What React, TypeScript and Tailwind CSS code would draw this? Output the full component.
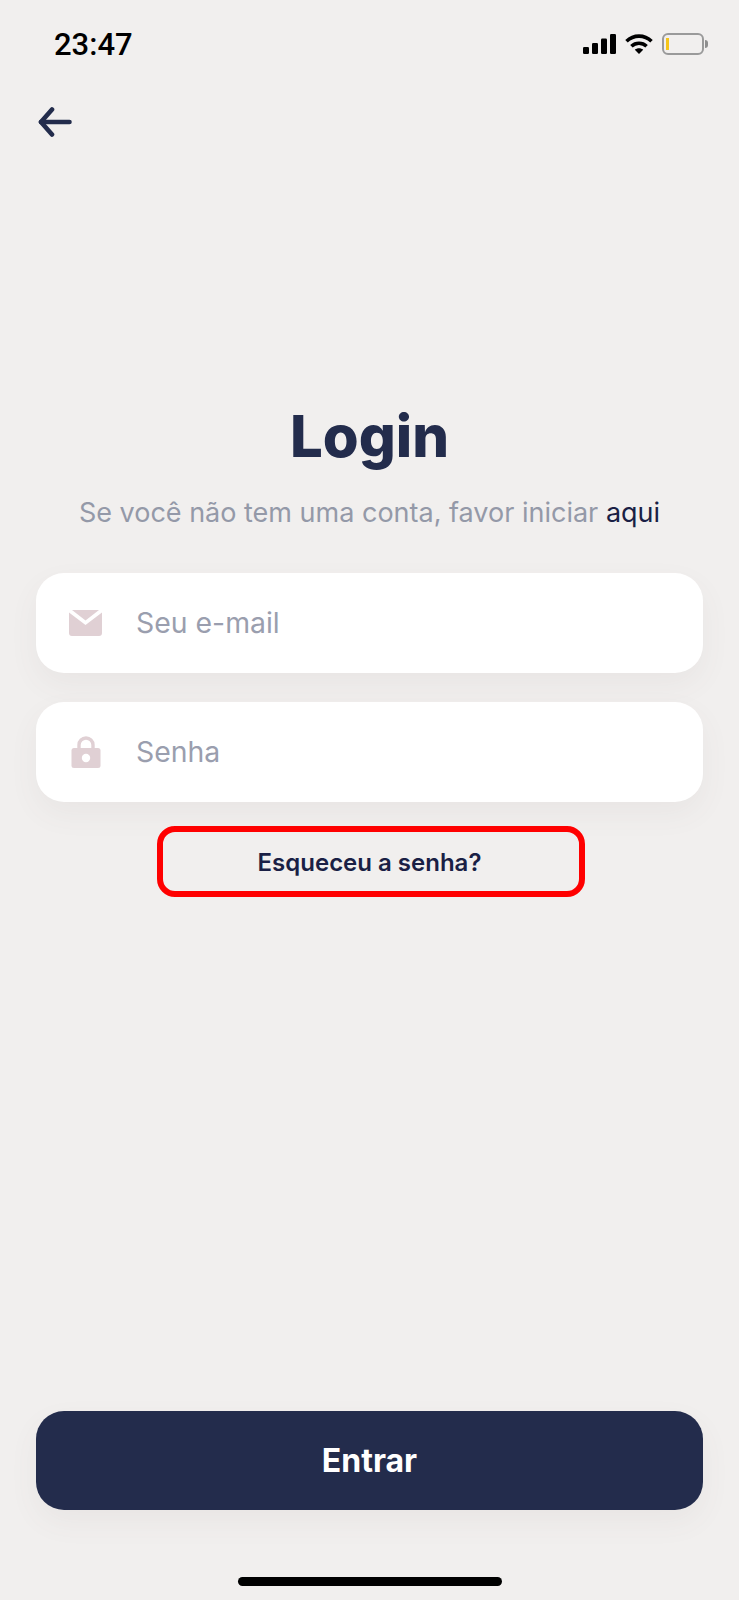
const FONT = "font-['Inter','Liberation_Sans',sans-serif]";

function SignalIcon() {
  return (
    <svg width="33" height="20" viewBox="0 0 33 20" fill="#000">
      <rect x="0" y="13" width="6" height="7" rx="1.2" />
      <rect x="9" y="9" width="6" height="11" rx="1.2" />
      <rect x="18" y="4.5" width="6" height="15.5" rx="1.2" />
      <rect x="27" y="0" width="6" height="20" rx="1.2" />
    </svg>
  );
}

function WifiIcon() {
  return (
    <svg width="28" height="20" viewBox="0 0 28 20" fill="none" stroke="#000" strokeWidth="3.6">
      <path d="M1.5 7.2C8.6 0.4 19.4 0.4 26.5 7.2" />
      <path d="M6.4 12.2C10.7 8.2 17.3 8.2 21.6 12.2" />
      <path d="M14 20L9.8 15.8C12.2 13.8 15.8 13.8 18.2 15.8Z" fill="#000" stroke="none" />
    </svg>
  );
}

function BatteryIcon() {
  return (
    <div className="flex items-center">
      <div className="flex h-[22px] w-[42px] items-center rounded-[6px] border-2 border-[#9a9a9a] pl-[2px]">
        <div className="h-[12px] w-[2.5px] bg-[#f5c518]" />
      </div>
      <div className="ml-[1px] h-[8px] w-[3px] rounded-r-full bg-[#8e8e8e]" />
    </div>
  );
}

function BackArrow() {
  return (
    <svg width="34" height="30" viewBox="0 0 34 30" fill="none" stroke="#232c4c" strokeWidth="4.6" strokeLinecap="round" strokeLinejoin="round">
      <path d="M31.5 15H3" />
      <path d="M14 2.5L3 15L14 27.5" />
    </svg>
  );
}

function MailIcon() {
  return (
    <svg width="33" height="26" viewBox="0 0 33 26" className="shrink-0">
      <path d="M0 2.5L0 23a3 3 0 0 0 3 3H30a3 3 0 0 0 3-3V2.5L16.5 15Z" fill="#e0d0d4" />
      <path d="M3 0H30L16.5 10.5Z" fill="#e0d0d4" />
    </svg>
  );
}

function LockIcon() {
  return (
    <svg width="30" height="32" viewBox="0 0 30 32" className="ml-[2px] shrink-0">
      <path d="M8 13V9a7 7 0 0 1 14 0v4" fill="none" stroke="#e0d0d4" strokeWidth="3.4" />
      <rect x="0.5" y="12" width="29" height="20" rx="2.5" fill="#e0d0d4" />
      <circle cx="15" cy="22" r="4.2" fill="#fff" />
    </svg>
  );
}

function Field({ icon, label }: { icon: React.ReactNode; label: string }) {
  return (
    <div className="flex h-[100px] items-center rounded-[28px] bg-white shadow-[0_12px_30px_rgba(110,80,80,0.06)]">
      <div className="flex w-[100px] justify-start pl-[33px]">{icon}</div>
      <span className="text-[28.4px] leading-none text-[#9a9eae]">{label}</span>
    </div>
  );
}

export default function App() {
  return (
    <div className={`${FONT} flex h-[1600px] w-full flex-col bg-[#f1efee] px-9`}>
      {/* STATUS BAR */}
      <div className="mr-[-5px] mt-[33px] flex h-[22px] items-center justify-between pl-[18px]">
        <span className="font-['Roboto',sans-serif] text-[31px] font-medium leading-none text-black">23:47</span>
        <div className="flex items-center gap-[9px]">
          <SignalIcon />
          <WifiIcon />
          <BatteryIcon />
        </div>
      </div>

      <div className="ml-[2px] mt-[52px] h-[30px] w-[34px]">
        <BackArrow />
      </div>

      {/* TITLE */}
      <h1 className="mt-[269px] text-center text-[58px] font-extrabold leading-[60px] text-[#232c4c]">
        Login
      </h1>
      <p className="mt-[29px] text-center text-[27px] leading-[36px] text-[#9499a8]">
        Se você não tem uma conta, favor iniciar <span className="text-[#1a1f45]">aqui</span>
      </p>

      {/* FORM */}
      <div className="mt-[42px] flex flex-col gap-[29px]">
        <Field icon={<MailIcon />} label="Seu e-mail" />
        <Field icon={<LockIcon />} label="Senha" />
      </div>

      <div className="ml-[121px] mt-[24px] flex h-[71px] w-[428px] items-center justify-center rounded-[18px] border-[6px] border-[#ff0000] pr-[3px] pt-[2px]">
        <span className="text-[24px] font-semibold text-[#1a1f45]">Esqueceu a senha?</span>
      </div>

      {/* FOOTER */}
      <button className="mt-auto flex h-[99px] items-center justify-center rounded-[28px] bg-[#232c4c] shadow-[0_12px_30px_rgba(110,80,80,0.06)]">
        <span className="text-[32px] font-bold leading-none text-white">Entrar</span>
      </button>
      <div className="mb-[14px] mt-[67px] h-[9px] w-[264px] self-center rounded-full bg-black" />
    </div>
  );
}
